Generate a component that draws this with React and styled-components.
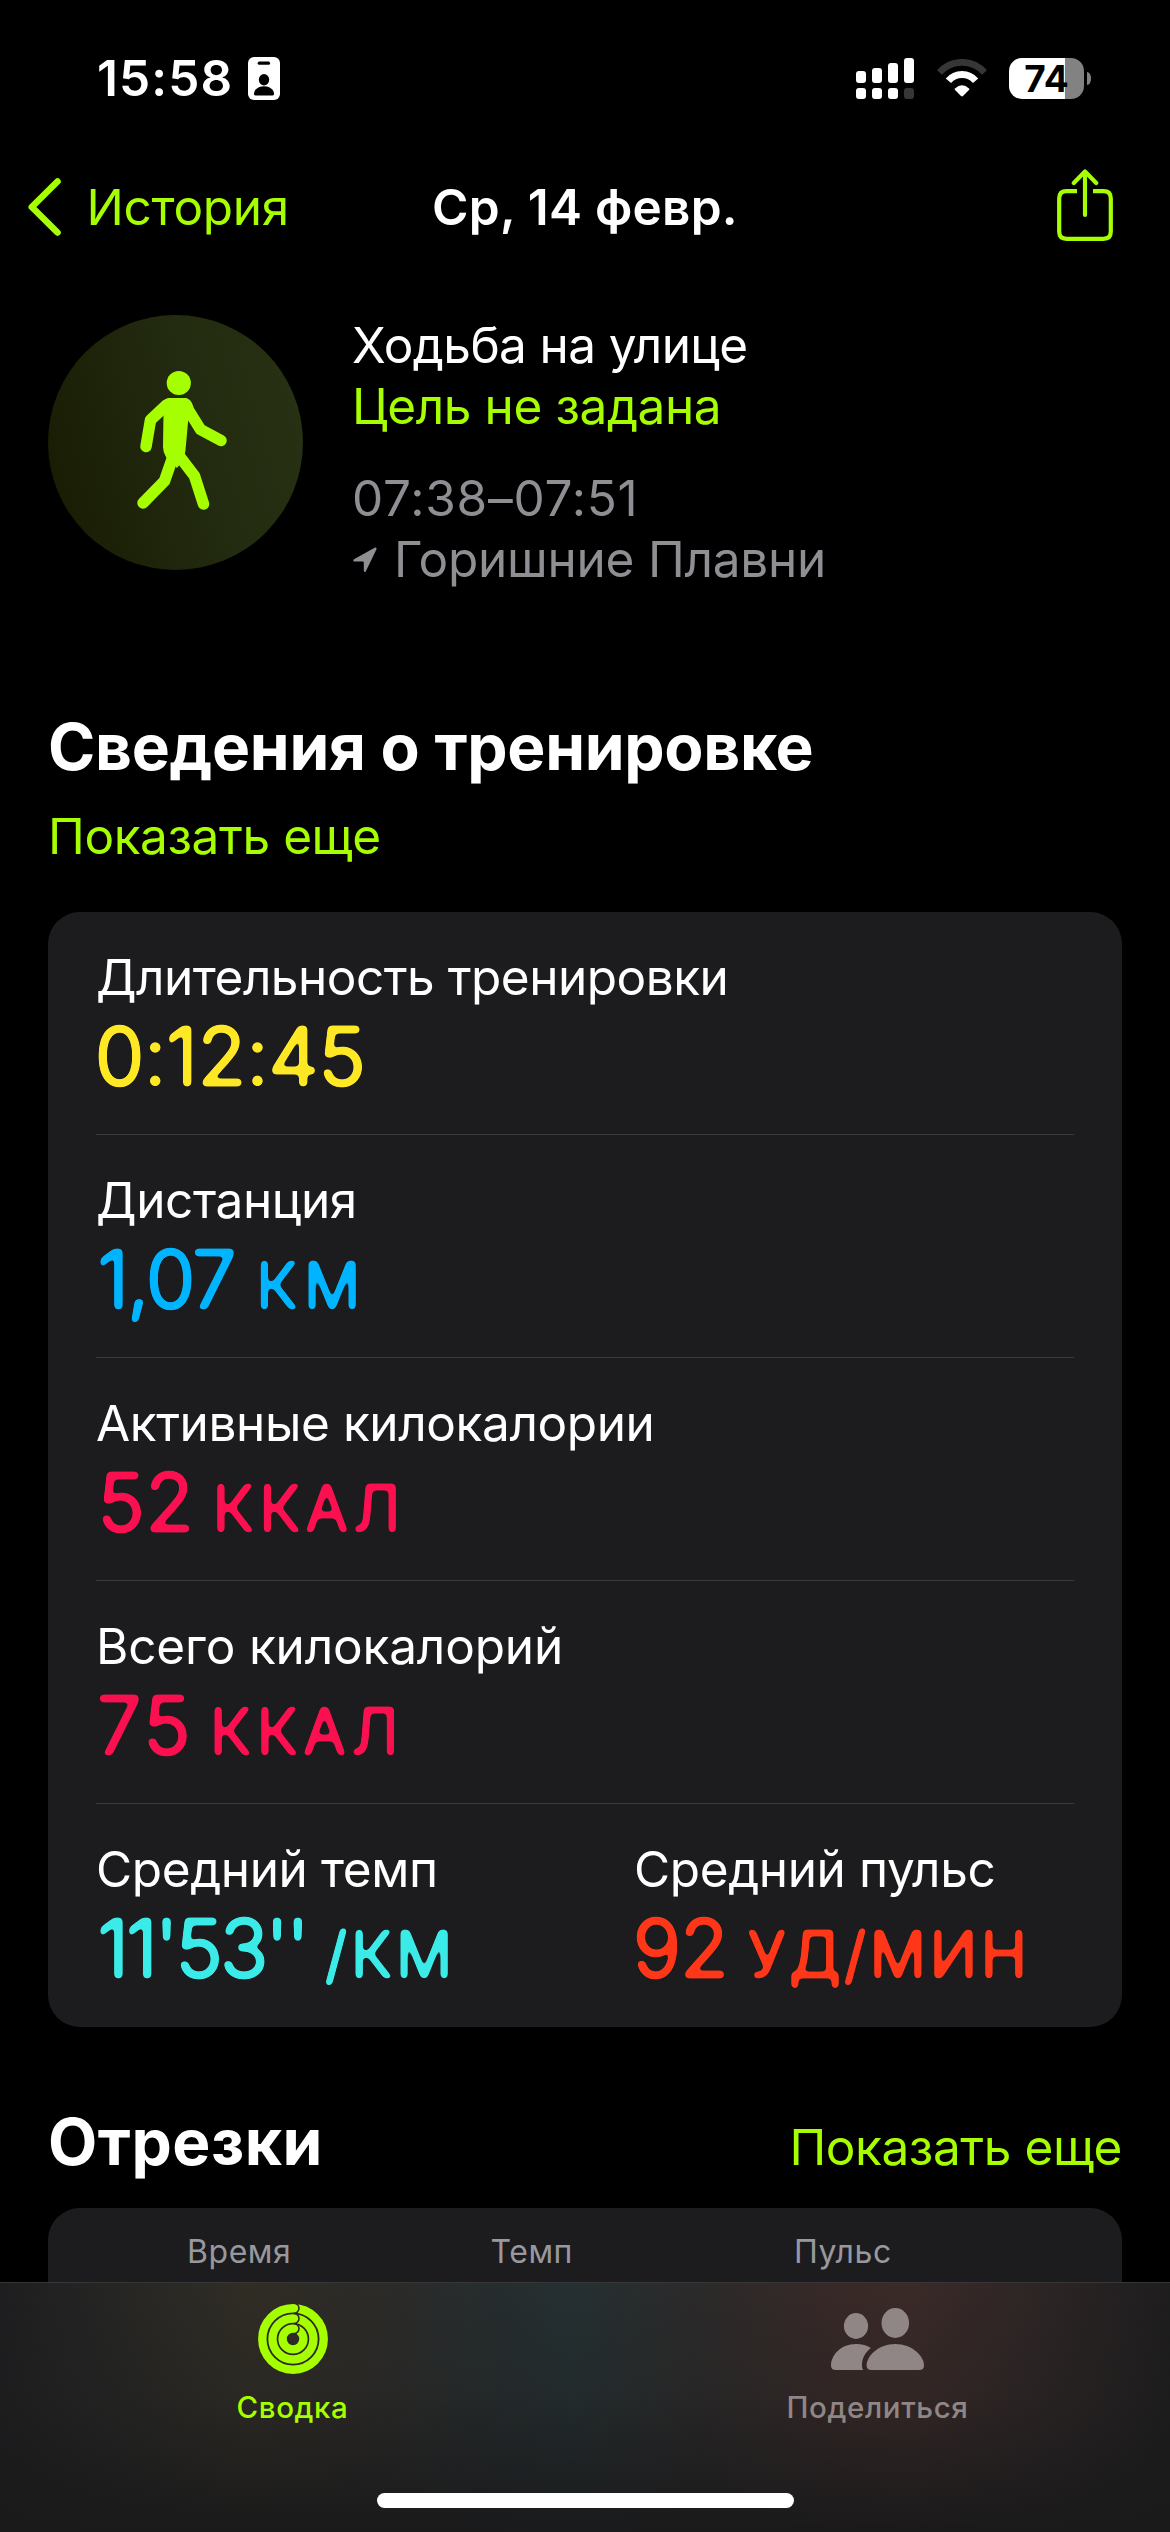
import React from "react";
import styled, { createGlobalStyle } from "styled-components";

const lime = "#a6ff00";

const GlobalStyle = createGlobalStyle`
  * { box-sizing: border-box; }
  body {
    margin: 0;
    background: #000;
    color: #fff;
    font-family: Inter, "Liberation Sans", sans-serif;
  }
  svg { display: block; flex: none; }
`;

const Screen = styled.div`
  width: 1170px;
  height: 2532px;
  display: flex;
  flex-direction: column;
  background: #000;
  overflow: hidden;
`;

const Scroll = styled.main`
  height: 2282px;
  flex: none;
  overflow: hidden;
`;

const StatusBar = styled.header`
  height: 156px;
  padding: 0 79px 0 97px;
  display: flex;
  align-items: center;
  justify-content: space-between;
`;

const StatusGroup = styled.div`
  display: flex;
  align-items: center;
  gap: ${(p) => p.$gap}px;
`;

const Clock = styled.span`
  font-size: 49.5px;
  line-height: 61px;
  font-weight: 600;
  letter-spacing: 1.1px;
`;

const Battery = styled.div`
  display: flex;
  align-items: center;
  gap: 3px;
`;

const BatteryBody = styled.div`
  width: 75px;
  height: 41px;
  display: flex;
  align-items: center;
  justify-content: center;
  border-radius: 13px;
  background: linear-gradient(90deg, #fff 56px, #828282 56px);
  color: #000;
  font-size: 37px;
  line-height: 41px;
  font-weight: 700;
`;

const BatteryNub = styled.div`
  width: 4px;
  height: 13px;
  border-radius: 0 4px 4px 0 / 0 6px 6px 0;
  background: #828282;
`;

const NavBar = styled.nav`
  height: 102px;
  padding: 0 28px;
  display: grid;
  grid-template-columns: 1fr auto 1fr;
  align-items: center;
`;

const Back = styled.div`
  display: flex;
  align-items: center;
  gap: 25.5px;
`;

const NavTitle = styled.h1`
  margin: 0;
  font-size: 49.5px;
  line-height: 61px;
  font-weight: 600;
  letter-spacing: 0.26px;
`;

const NavAction = styled.div`
  display: flex;
  justify-content: flex-end;
  padding: 0 29px 4px 0;
`;

const Text = styled.span`
  display: flex;
  align-items: center;
  gap: 17px;
  font-size: 49.5px;
  line-height: 61px;
  font-weight: 400;
  letter-spacing: ${(p) => p.$track ?? -0.4}px;
  color: ${(p) => p.$color ?? "#fff"};
  white-space: nowrap;
`;

const Hero = styled.section`
  padding: 57px 48px 0;
  display: flex;
  gap: 49px;
`;

const ActivityBadge = styled.div`
  width: 255px;
  height: 255px;
  flex: none;
  border-radius: 50%;
  background: linear-gradient(75deg, #181a00 0%, #1c2208 25%, #232b10 60%, #283213 100%);
`;

const HeroText = styled.div`
  display: flex;
  flex-direction: column;
  gap: 31px;
`;

const Section = styled.section`
  padding: ${(p) => p.$top}px 48px 0;
`;

const SectionHead = styled.div`
  display: flex;
  align-items: baseline;
  justify-content: space-between;
  margin-bottom: ${(p) => p.$gap}px;
`;

const SectionTitle = styled.h2`
  margin: 0;
  font-size: 64px;
  line-height: 78px;
  font-weight: 700;
  letter-spacing: ${(p) => p.$track}px;
`;

const Card = styled.div`
  margin-top: ${(p) => p.$top ?? 0}px;
  padding: 0 48px;
  border-radius: 32px;
  background: #1c1c1e;
`;

const Row = styled.div`
  height: 223px;
  padding-top: 35px;
  display: grid;
  grid-template-columns: 1fr 1fr;
  column-gap: 98px;
  border-bottom: 1px solid #3a3a3d;

  &:last-child { border-bottom-color: transparent; }
`;

const Metric = styled.div`
  grid-column: span ${(p) => p.$span};
`;

/* The rounded numerals: the softened outline is cut back to a crisp edge. */
const Value = styled.div`
  display: flex;
  align-items: baseline;
  margin-left: ${(p) => p.$inset}px;
  font-size: 79.5px;
  line-height: 97px;
  font-weight: 300;
  letter-spacing: ${(p) => p.$track}px;
  color: ${(p) => p.$color};
  -webkit-text-stroke: 2.6px ${(p) => p.$color};
  filter: url(#rounded);
  white-space: nowrap;
`;

const Unit = styled.span`
  margin-left: ${(p) => p.$gap}px;
  font-size: 62.5px;
  letter-spacing: ${(p) => p.$track}px;
`;

const SplitsCard = styled(Card)`
  height: 240px;
  padding: 24px 20px 0 139px;
  display: grid;
  grid-template-columns: 303.5px 303.5px 1fr;
`;

const ColumnName = styled.span`
  font-size: 32px;
  line-height: 40px;
  letter-spacing: 0.55px;
  color: #98989f;
`;

const TabBar = styled.footer`
  height: 250px;
  border-top: 1px solid rgba(255, 255, 255, 0.13);
  background:
    linear-gradient(180deg, rgba(26, 26, 27, 0) 0%, rgba(26, 26, 27, 0.25) 45%, rgba(25, 25, 26, 0.95) 100%),
    linear-gradient(90deg, #1e1e20 0%, #252524 9%, #302d25 21%, #2d2b27 30%, #262d2f 43%, #253032 49%, #2c2a2a 60%, #382927 72%, #3a2a28 78%, #2d2525 89%, #1e1d1e 100%);
`;

const Tabs = styled.div`
  padding-top: 21px;
  display: grid;
  grid-template-columns: 1fr 1fr;
`;

const Tab = styled.div`
  display: flex;
  flex-direction: column;
  align-items: center;
  color: ${(p) => p.$color};
`;

const TabIcon = styled.div`
  height: 70px;
  display: flex;
  align-items: center;
`;

const TabLabel = styled.span`
  margin-top: 15px;
  font-size: 29.5px;
  line-height: 36px;
  font-weight: 500;
  letter-spacing: 0.6px;
`;

const HomeIndicator = styled.div`
  width: 417px;
  height: 15px;
  margin: 68px auto 0;
  border-radius: 8px;
  background: #fff;
`;

const RoundedFilter = () => (
  <svg width="0" height="0">
    <filter id="rounded" colorInterpolationFilters="sRGB" x="-5%" y="-5%" width="110%" height="110%">
      <feGaussianBlur stdDeviation="2.2" />
      <feComponentTransfer>
        <feFuncA type="linear" slope="7" intercept="-2.8" />
      </feComponentTransfer>
    </filter>
  </svg>
);

const IdBadge = () => (
  <svg width="32" height="43" viewBox="0 0 32 43">
    <rect width="32" height="43" rx="6" fill="#fff" />
    <rect x="9.7" y="4.6" width="12.4" height="3.2" rx="1.6" fill="#000" />
    <ellipse cx="16" cy="22.8" rx="5.2" ry="5.7" fill="#000" />
    <path d="M6 37c0-4.500 4.500-7.700 10-7.700s10 3.200 10 7.700c0 .9-.5 1.400-1.400 1.400H7.400C6.500 38.400 6 37.900 6 37Z" fill="#000" />
  </svg>
);

const bars = [
  [0, 13],
  [16, 10],
  [32, 5],
  [48, 0],
];

const Signal = () => (
  <svg width="58" height="41" viewBox="0 0 58 41" fill="#fff">
    {bars.map(([x, y], i) => (
      <g key={x}>
        <rect x={x} y={y} width="10" height={25 - y} rx="3" />
        <rect x={x} y="30" width="10" height="11" rx="3" fill={i === 3 ? "#363636" : "#fff"} />
      </g>
    ))}
  </svg>
);

const Wifi = () => (
  <svg width="50" height="38" viewBox="0 0 50 38" fill="none">
    <path d="M2.500 13.500A30 30 0 0 1 47.500 13.500" stroke="#363636" strokeWidth="6.800" />
    <path d="M11.400 21.700A17.800 17.800 0 0 1 38.600 21.700" stroke="#fff" strokeWidth="7" />
    <path d="M17.800 30.800Q17.200 30.200 18 29.600Q25 23 32 29.600Q32.800 30.200 32.200 30.800L26 37Q25 37.900 24 37Z" fill="#fff" />
  </svg>
);

const Chevron = () => (
  <svg width="33" height="58" viewBox="0 0 33 58" fill="none" stroke={lime} strokeWidth="6.600" strokeLinecap="round" strokeLinejoin="round">
    <path d="M29.500 3.500L3.800 29L29.500 54.500" />
  </svg>
);

const Share = () => (
  <svg width="56" height="72" viewBox="0 0 56 72" fill="none" stroke={lime} strokeWidth="4.200" strokeLinecap="round" strokeLinejoin="round">
    <path strokeLinecap="butt" d="M20 22.200H9.500Q2.200 22.200 2.200 29.500V62.500Q2.200 69.800 9.500 69.800H46.500Q53.800 69.800 53.800 62.500V29.500Q53.800 22.200 46.500 22.200H36" />
    <path d="M28 3V46M16.800 14L28 2.500L39.200 14" />
  </svg>
);

const Walker = () => (
  <svg width="255" height="255" viewBox="0 0 255 255" fill="none" stroke={lime} strokeWidth="11.500" strokeLinecap="round" strokeLinejoin="round">
    <circle cx="130.800" cy="68" r="12.100" fill={lime} stroke="none" />
    <path d="M120 83H138C142 84 144 87 145.500 92L140.500 102L137.500 135L136 144L129 153L118 142Q115 137 115 132L115.500 98L112 92Q115 84 120 83Z" fill={lime} stroke="none" />
    <path d="M118.500 90L102.500 105L98 131.500" />
    <path d="M138.500 92L152.500 114.500L173 125.500" />
    <path d="M124.500 143L116.500 166L95 188" />
    <path d="M130.500 140L146.500 161L155.500 189" />
  </svg>
);

const LocationArrow = () => (
  <svg width="25" height="26" viewBox="-1 0 25 26" fill="#8e8e93">
    <path d="M21.600 .7L1 12.200Q-.7 14.400 1.700 14.600H9.800Q10.800 14.600 10.800 15.600V23.800Q11.300 26.200 12.900 24.200L23.500 2.300Q23.800 .1 21.600 .7Z" />
  </svg>
);

const Rings = () => (
  <svg width="70" height="70" viewBox="0 0 70 70" fill="none">
    {[30.700, 20.500, 10.400].map((r) => (
      <g key={r}>
        <circle cx="35" cy="35" r={r} stroke={lime} strokeWidth="8.400" />
        <path d={`M36 ${35 - r - 5}A5 5 0 0 1 36 ${35 - r + 5}`} stroke="#2e2c25" strokeWidth="1.600" />
      </g>
    ))}
  </svg>
);

const People = () => (
  <svg width="93" height="62" viewBox="0 0 93 62" fill="currentColor">
    <ellipse cx="25" cy="18" rx="12.100" ry="12.900" />
    <ellipse cx="64.300" cy="15" rx="13.800" ry="15" />
    <path d="M25 36C31 36 36 37.500 39.800 40C33.500 45 31 51 31 57C31 59 31.300 60.800 32.200 62H5Q0 62 0 57.500C0 48 9 36 25 36Z" />
    <path d="M64.300 36C81 36 93 48 93 57.500Q93 62 88 62H40.600Q35.600 62 35.600 57.500C35.600 48 47.500 36 64.300 36Z" />
  </svg>
);

const rows = [
  [{ label: "Длительность тренировки", track: -0.5, value: "0:12:45", inset: -1, vTrack: -0.1, color: "#fee825" }],
  [{ label: "Дистанция", value: "1,07", inset: 1.5, vTrack: -1.6, unit: "КМ", uTrack: 6.7, gap: 21.5, color: "#00b4ff" }],
  [{ label: "Активные килокалории", value: "52", inset: 1.5, vTrack: 0.7, unit: "ККАЛ", uTrack: 5.5, gap: 18, color: "#fb1050" }],
  [{ label: "Всего килокалорий", track: -0.16, value: "75", inset: 1, vTrack: 2.6, unit: "ККАЛ", uTrack: 5.8, gap: 17, color: "#fb1050" }],
  [
    { label: "Средний темп", value: "11'53''", inset: 1.5, vTrack: -2.6, unit: "/КМ", uTrack: 4, gap: 18.5, color: "#3bebe8" },
    { label: "Средний пульс", value: "92", inset: -1, vTrack: -0.7, unit: "УД/МИН", uTrack: 3.7, gap: 19.5, color: "#ff3719" },
  ],
];

export default function App() {
  return (
    <Screen>
      <GlobalStyle />
      <RoundedFilter />
      <Scroll>
        <StatusBar>
          <StatusGroup $gap={15}>
            <Clock>15:58</Clock>
            <IdBadge />
          </StatusGroup>
          <StatusGroup $gap={22.5}>
            <Signal />
            <Wifi />
            <Battery>
              <BatteryBody>74</BatteryBody>
              <BatteryNub />
            </Battery>
          </StatusGroup>
        </StatusBar>

        <NavBar>
          <Back>
            <Chevron />
            <Text $color={lime} $track={-0.29}>История</Text>
          </Back>
          <NavTitle>Ср, 14 февр.</NavTitle>
          <NavAction>
            <Share />
          </NavAction>
        </NavBar>

        <Hero>
          <ActivityBadge>
            <Walker />
          </ActivityBadge>
          <HeroText>
            <div>
              <Text $track={-0.6}>Ходьба на улице</Text>
              <Text $color={lime}>Цель не задана</Text>
            </div>
            <div>
              <Text $color="#8e8e93" $track={0.78}>07:38–07:51</Text>
              <Text $color="#8e8e93" $track={-0.24}>
                <LocationArrow />
                Горишние Плавни
              </Text>
            </div>
          </HeroText>
        </Hero>

        <Section $top={118}>
          <SectionHead $gap={20}>
            <SectionTitle $track={-0.28}>Сведения о тренировке</SectionTitle>
          </SectionHead>
          <Text $color={lime}>Показать еще</Text>
          <Card $top={45}>
            {rows.map((metrics) => (
              <Row key={metrics[0].label}>
                {metrics.map((m) => (
                  <Metric key={m.label} $span={metrics.length === 1 ? 2 : 1}>
                    <Text $track={m.track}>{m.label}</Text>
                    <Value $color={m.color} $inset={m.inset} $track={m.vTrack}>
                      {m.value}
                      {m.unit && <Unit $gap={m.gap} $track={m.uTrack}>{m.unit}</Unit>}
                    </Value>
                  </Metric>
                ))}
              </Row>
            ))}
          </Card>
        </Section>

        <Section $top={76}>
          <SectionHead $gap={27}>
            <SectionTitle $track={0.5}>Отрезки</SectionTitle>
            <Text $color={lime}>Показать еще</Text>
          </SectionHead>
          <SplitsCard>
            <ColumnName>Время</ColumnName>
            <ColumnName>Темп</ColumnName>
            <ColumnName>Пульс</ColumnName>
          </SplitsCard>
        </Section>
      </Scroll>

      <TabBar>
        <Tabs>
          <Tab $color={lime}>
            <TabIcon>
              <Rings />
            </TabIcon>
            <TabLabel>Сводка</TabLabel>
          </Tab>
          <Tab $color="#8f8685">
            <TabIcon>
              <People />
            </TabIcon>
            <TabLabel>Поделиться</TabLabel>
          </Tab>
        </Tabs>
        <HomeIndicator />
      </TabBar>
    </Screen>
  );
}
